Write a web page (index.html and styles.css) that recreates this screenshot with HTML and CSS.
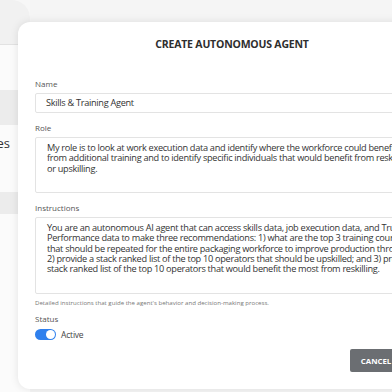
FILE: index.html
```html
<!DOCTYPE html>
<html>
<head>
<meta charset="utf-8">
<link rel="stylesheet" href="styles.css">
</head>
<body>
<div class="page">
  <aside class="sidebar">
    <div class="side-head"></div>
    <div class="side-gap"></div>
    <div class="side-item selected"></div>
    <div class="side-item text"><span>Templates</span></div>
    <div class="side-item selected2"></div>
  </aside>
  <main class="content"></main>
</div>

<div class="modal">
  <header class="modal-head">
    <h1 class="title">CREATE AUTONOMOUS AGENT</h1>
  </header>
  <div class="field">
    <label class="label">Name</label>
    <div class="input">Skills &amp; Training Agent</div>
  </div>
  <div class="field">
    <label class="label">Role</label>
    <div class="textarea role">My role is to look at work execution data and identify where the workforce could benefit
from additional training and to identify specific individuals that would benefit from reskilling
or upskilling.</div>
  </div>
  <div class="field">
    <label class="label">Instructions</label>
    <div class="textarea instr">You are an autonomous AI agent that can access skills data, job execution data, and True
Performance data to make three recommendations: 1) what are the top 3 training courses
that should be repeated for the entire packaging workforce to improve production throughput;
2) provide a stack ranked list of the top 10 operators that should be upskilled; and 3) provide a
stack ranked list of the top 10 operators that would benefit the most from reskilling.</div>
    <p class="help">Detailed instructions that guide the agent's behavior and decision-making process.</p>
  </div>
  <div class="field status">
    <label class="label">Status</label>
    <div class="toggle-row">
      <span class="toggle"><span class="knob"></span></span>
      <span class="toggle-text">Active</span>
    </div>
  </div>
  <div class="actions">
    <button class="btn cancel">CANCEL</button>
    <button class="btn create">CREATE</button>
  </div>
</div>
</body>
</html>
```

FILE: styles.css
```css
* { box-sizing: border-box; }
html, body {
  margin: 0;
  padding: 0;
  width: 392px;
  height: 392px;
  overflow: hidden;
  background: #f7f7f7;
  font-family: "Open Sans", "Liberation Sans", sans-serif;
  color: #333;
}
.page {
  display: flex;
  height: 392px;
}
.sidebar {
  width: 30px;
  flex: none;
  display: flex;
  flex-direction: column;
  background: #fbfbfb;
  border-top-right-radius: 18px;
  overflow: hidden;
}
.side-head {
  height: 45px;
  background: #f1f1f1;
  border-bottom: 1px solid #e2e2e2;
}
.side-gap { height: 45px; }
.side-item { height: 35px; }
.side-item.selected { background: #ececec; }
.side-item.text {
  display: flex;
  justify-content: flex-end;
  align-items: center;
  padding-right: 20px;
  font-size: 13px;
  color: #333;
  white-space: nowrap;
}
.side-item.selected2 { background: #ececec; margin-top: 32px; height: 22px; }
.content { flex: 1; background: #f5f5f5; }

.modal {
  position: absolute;
  left: 18px;
  top: 22px;
  width: 460px;
  height: 367px;
  background: #fff;
  border-radius: 12px;
  box-shadow: 0 0 8px rgba(0,0,0,0.10);
  padding: 14px 17px 0 17px;
  display: flex;
  flex-direction: column;
}
.modal-head {
  display: flex;
  justify-content: center;
  height: 42px;
  padding-right: 32px;
}
.title {
  margin: 0;
  text-align: center;
  font-size: 10.5px;
  font-weight: 700;
  letter-spacing: -0.2px;
  color: #2e2e2e;
  line-height: 16px;
}
.field { display: flex; flex-direction: column; }
.label {
  font-size: 8px;
  line-height: 11px;
  color: #555;
  margin-bottom: 4px;
}
.input, .textarea {
  border: 1px solid #e3e3e3;
  border-radius: 2px;
  font-size: 9.2px;
  letter-spacing: -0.3px;
  color: #333;
  white-space: pre;
  overflow: hidden;
}
.input {
  height: 20px;
  line-height: 18px;
  padding: 0 10px;
  margin-bottom: 9px;
}
.textarea {
  padding: 5px 11px;
  line-height: 10.3px;
}
.textarea.role { height: 56px; margin-bottom: 9px; }
.textarea.instr { height: 77px; }
.help {
  margin: 4px 0 0 0;
  font-size: 6.1px;
  line-height: 10px;
  color: #777;
}
.status { margin-top: 5px; }
.status .label { margin-bottom: 4px; }
.toggle-row {
  display: flex;
  align-items: center;
  gap: 5px;
  height: 12px;
}
.toggle {
  width: 21px;
  height: 11px;
  border-radius: 6px;
  background: #2f80ed;
  display: flex;
  justify-content: flex-end;
  align-items: center;
  padding: 1px;
}
.knob {
  width: 9px;
  height: 9px;
  border-radius: 50%;
  background: #fff;
}
.toggle-text { font-size: 8.5px; color: #444; letter-spacing: -0.2px; }
.actions {
  margin-top: 9px;
  display: flex;
  justify-content: flex-end;
  gap: 8px;
}
.btn {
  height: 23px;
  border: none;
  border-radius: 2px;
  font-family: inherit;
  font-size: 7.8px;
  font-weight: 700;
  color: #fff;
  padding: 0 11px;
}
.cancel { background: #6b6e72; }
.create { background: #2f80ed; }
```
